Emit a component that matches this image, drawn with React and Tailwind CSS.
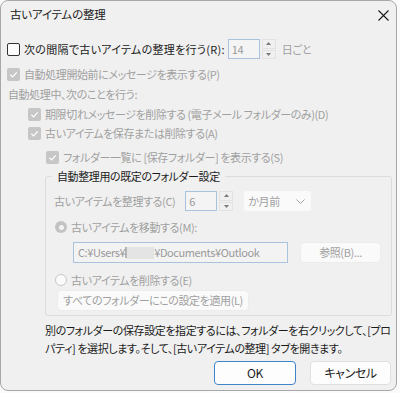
import React from 'react';

const font = { fontFamily: '"Noto Sans CJK JP", "Noto Sans", sans-serif', fontFeatureSettings: '"palt"' };

const Check = ({ checked, disabled }) =>
    disabled ? (
        <span className="w-[13px] h-[13px] rounded-[2px] bg-[#c6c6c6] flex items-center justify-center shrink-0">
            {checked && (
                <svg width="9" height="9" viewBox="0 0 10 10">
                    <path d="M1.5 5.2 L4 7.6 L8.6 2.6" fill="none" stroke="#ffffff" strokeWidth="1.4" />
                </svg>
            )}
        </span>
    ) : (
        <span className="w-[13px] h-[13px] rounded-[2px] border border-[#333333] bg-[#fdfdfd] shrink-0" />
    );

const Radio = ({ selected }) =>
    selected ? (
        <span className="w-[12px] h-[12px] rounded-full bg-[#c3c3c3] flex items-center justify-center shrink-0">
            <span className="w-[5px] h-[5px] rounded-full bg-[#f3f3f3]" />
        </span>
    ) : (
        <span className="w-[12px] h-[12px] rounded-full border border-[#c6c6c6] bg-[#fbfbfb] shrink-0" />
    );

const Spinner = () => (
    <div className="flex flex-col w-[14px] h-[20px] gap-[1px]">
        <div className="flex-1 border border-[#e2e2e2] flex items-center justify-center">
            <svg width="5" height="3" viewBox="0 0 5 3"><path d="M0 3 L2.5 0 L5 3 Z" fill="#7a7a7a" /></svg>
        </div>
        <div className="flex-1 border border-[#e2e2e2] flex items-center justify-center">
            <svg width="5" height="3" viewBox="0 0 5 3"><path d="M0 0 L2.5 3 L5 0 Z" fill="#7a7a7a" /></svg>
        </div>
    </div>
);

const App = () => {
    return (
        <div className="w-[400px] h-[393px] bg-[#fbfbfb]" style={font}>
            <div className="w-[397px] h-[391px] bg-[#f0f0f0] border border-[#a8a8a8] rounded-[8px] flex flex-col text-[11px] tracking-[-0.4px] text-[#1b1b1b] leading-none whitespace-nowrap">
                {/* Title bar */}
                <div className="h-[28px] flex items-center justify-between pl-[9px] pr-[6px]">
                    <span className="text-[11.5px] tracking-[-0.2px]">古いアイテムの整理</span>
                    <svg width="11" height="11" viewBox="0 0 11 11" className="mr-[1px]">
                        <path d="M0.5 0.5 L10.5 10.5 M10.5 0.5 L0.5 10.5" stroke="#1b1b1b" strokeWidth="1.1" />
                    </svg>
                </div>

                <div className="flex flex-col pl-[6px]">
                    {/* Row 1 */}
                    <div className="h-[20px] mt-[10px] flex items-center">
                        <Check />
                        <span className="ml-[4px] tracking-[0.3px]">次の間隔で古いアイテムの整理を行う(R):</span>
                        <div className="ml-auto mr-[85px] flex items-center">
                            <div className="w-[32px] h-[20px] border border-[#a9c2de] bg-[#f4f4f4] flex items-center pl-[3px] text-[#9a9a9a]">14</div>
                            <div className="ml-[2px]"><Spinner /></div>
                            <span className="ml-[6px] text-[#a0a0a0]">日ごと</span>
                        </div>
                    </div>

                    {/* Row 2 */}
                    <div className="h-[20px] mt-[5px] flex items-center text-[#a0a0a0]">
                        <Check checked disabled />
                        <span className="ml-[4px]">自動処理開始前にメッセージを表示する(P)</span>
                    </div>

                    {/* Row 3 */}
                    <div className="h-[20px] flex items-center text-[#a0a0a0] pl-[1px]">自動処理中、次のことを行う:</div>

                    {/* Row 4 */}
                    <div className="h-[20px] flex items-center text-[#a0a0a0] pl-[21px]">
                        <Check checked disabled />
                        <span className="ml-[4px]">期限切れメッセージを削除する (電子メール フォルダーのみ)(D)</span>
                    </div>

                    {/* Row 5 */}
                    <div className="h-[19px] flex items-center text-[#a0a0a0] pl-[21px]">
                        <Check checked disabled />
                        <span className="ml-[4px]">古いアイテムを保存または削除する(A)</span>
                    </div>

                    {/* Row 6 */}
                    <div className="h-[20px] mt-[4px] flex items-center text-[#a0a0a0] pl-[39px]">
                        <Check checked disabled />
                        <span className="ml-[4px]">フォルダー一覧に [保存フォルダー] を表示する(S)</span>
                    </div>

                    {/* Group */}
                    <fieldset className="ml-[38px] mr-[4px] mt-[1px] h-[148px] border border-[#dcdcdc] rounded-[3px] pl-[8px] pr-[10px]">
                        <legend className="px-[5px] ml-[-2px] text-[#1b1b1b] leading-[16px]">自動整理用の既定のフォルダー設定</legend>

                        <div className="h-[20px] mt-[7px] flex items-center text-[#a0a0a0]">
                            <span>古いアイテムを整理する(C)</span>
                            <div className="ml-[10px] w-[32px] h-[20px] border border-[#a9c2de] bg-[#f4f4f4] flex items-center pl-[3px] text-[#9a9a9a]">6</div>
                            <div className="ml-[2px]"><Spinner /></div>
                            <div className="ml-[11px] w-[67px] h-[20px] bg-[#fafafa] rounded-[3px] flex items-center justify-between pl-[4px] pr-[6px]">
                                <span>か月前</span>
                                <svg width="9" height="5" viewBox="0 0 9 5"><path d="M0.5 0.5 L4.5 4.5 L8.5 0.5" fill="none" stroke="#a0a0a0" strokeWidth="1" /></svg>
                            </div>
                        </div>

                        <div className="h-[20px] mt-[6px] flex items-center text-[#a0a0a0] pl-[1px]">
                            <Radio selected />
                            <span className="ml-[4px]">古いアイテムを移動する(M):</span>
                        </div>

                        <div className="mt-[5px] flex items-center">
                            <div className="ml-[19px] w-[215px] h-[21px] border border-[#a9c2de] bg-[#f3f3f3] flex items-center pl-[4px] text-[#9a9a9a] overflow-hidden">
                                <span>C:¥Users¥</span>
                                <span className="inline-block w-[2px] h-[11px] bg-[#9a9a9a] opacity-70" />
                                <span className="inline-block w-[27px] h-[12px] bg-[#e4e4e4]" />
                                <span>¥Documents¥Outlook</span>
                            </div>
                            <div className="ml-[12px] w-[81px] h-[21px] bg-[#fafafa] border border-[#ececec] rounded-[4px] flex items-center justify-center text-[#a0a0a0]">参照(B)...</div>
                        </div>

                        <div className="h-[20px] mt-[7px] flex items-center text-[#a0a0a0] pl-[1px]">
                            <Radio />
                            <span className="ml-[4px]">古いアイテムを削除する(E)</span>
                        </div>

                        <div className="mt-0 ml-[3px] w-[192px] h-[21px] bg-[#fafafa] border border-[#ececec] rounded-[4px] flex items-center justify-center text-[#a0a0a0]">すべてのフォルダーにこの設定を適用(L)</div>
                    </fieldset>

                    {/* Note */}
                    <div className="ml-[38px] mt-[5px] leading-[18px]">
                        <div>別のフォルダーの保存設定を指定するには、フォルダーを右クリックして、[プロ</div>
                        <div>パティ] を選択します。そして、[古いアイテムの整理] タブを開きます。</div>
                    </div>

                    {/* Buttons */}
                    <div className="flex justify-end gap-[14px] mt-[4px] pr-[5px]">
                        <button className="w-[82px] h-[24px] bg-[#fdfdfd] border border-[#3f84c9] rounded-[4px] text-[12px] text-[#1b1b1b]">OK</button>
                        <button className="w-[81px] h-[24px] bg-[#fdfdfd] border border-[#e0e0e0] rounded-[4px] text-[12px] text-[#1b1b1b]">キャンセル</button>
                    </div>
                </div>
            </div>
        </div>
    );
};

export default App;
